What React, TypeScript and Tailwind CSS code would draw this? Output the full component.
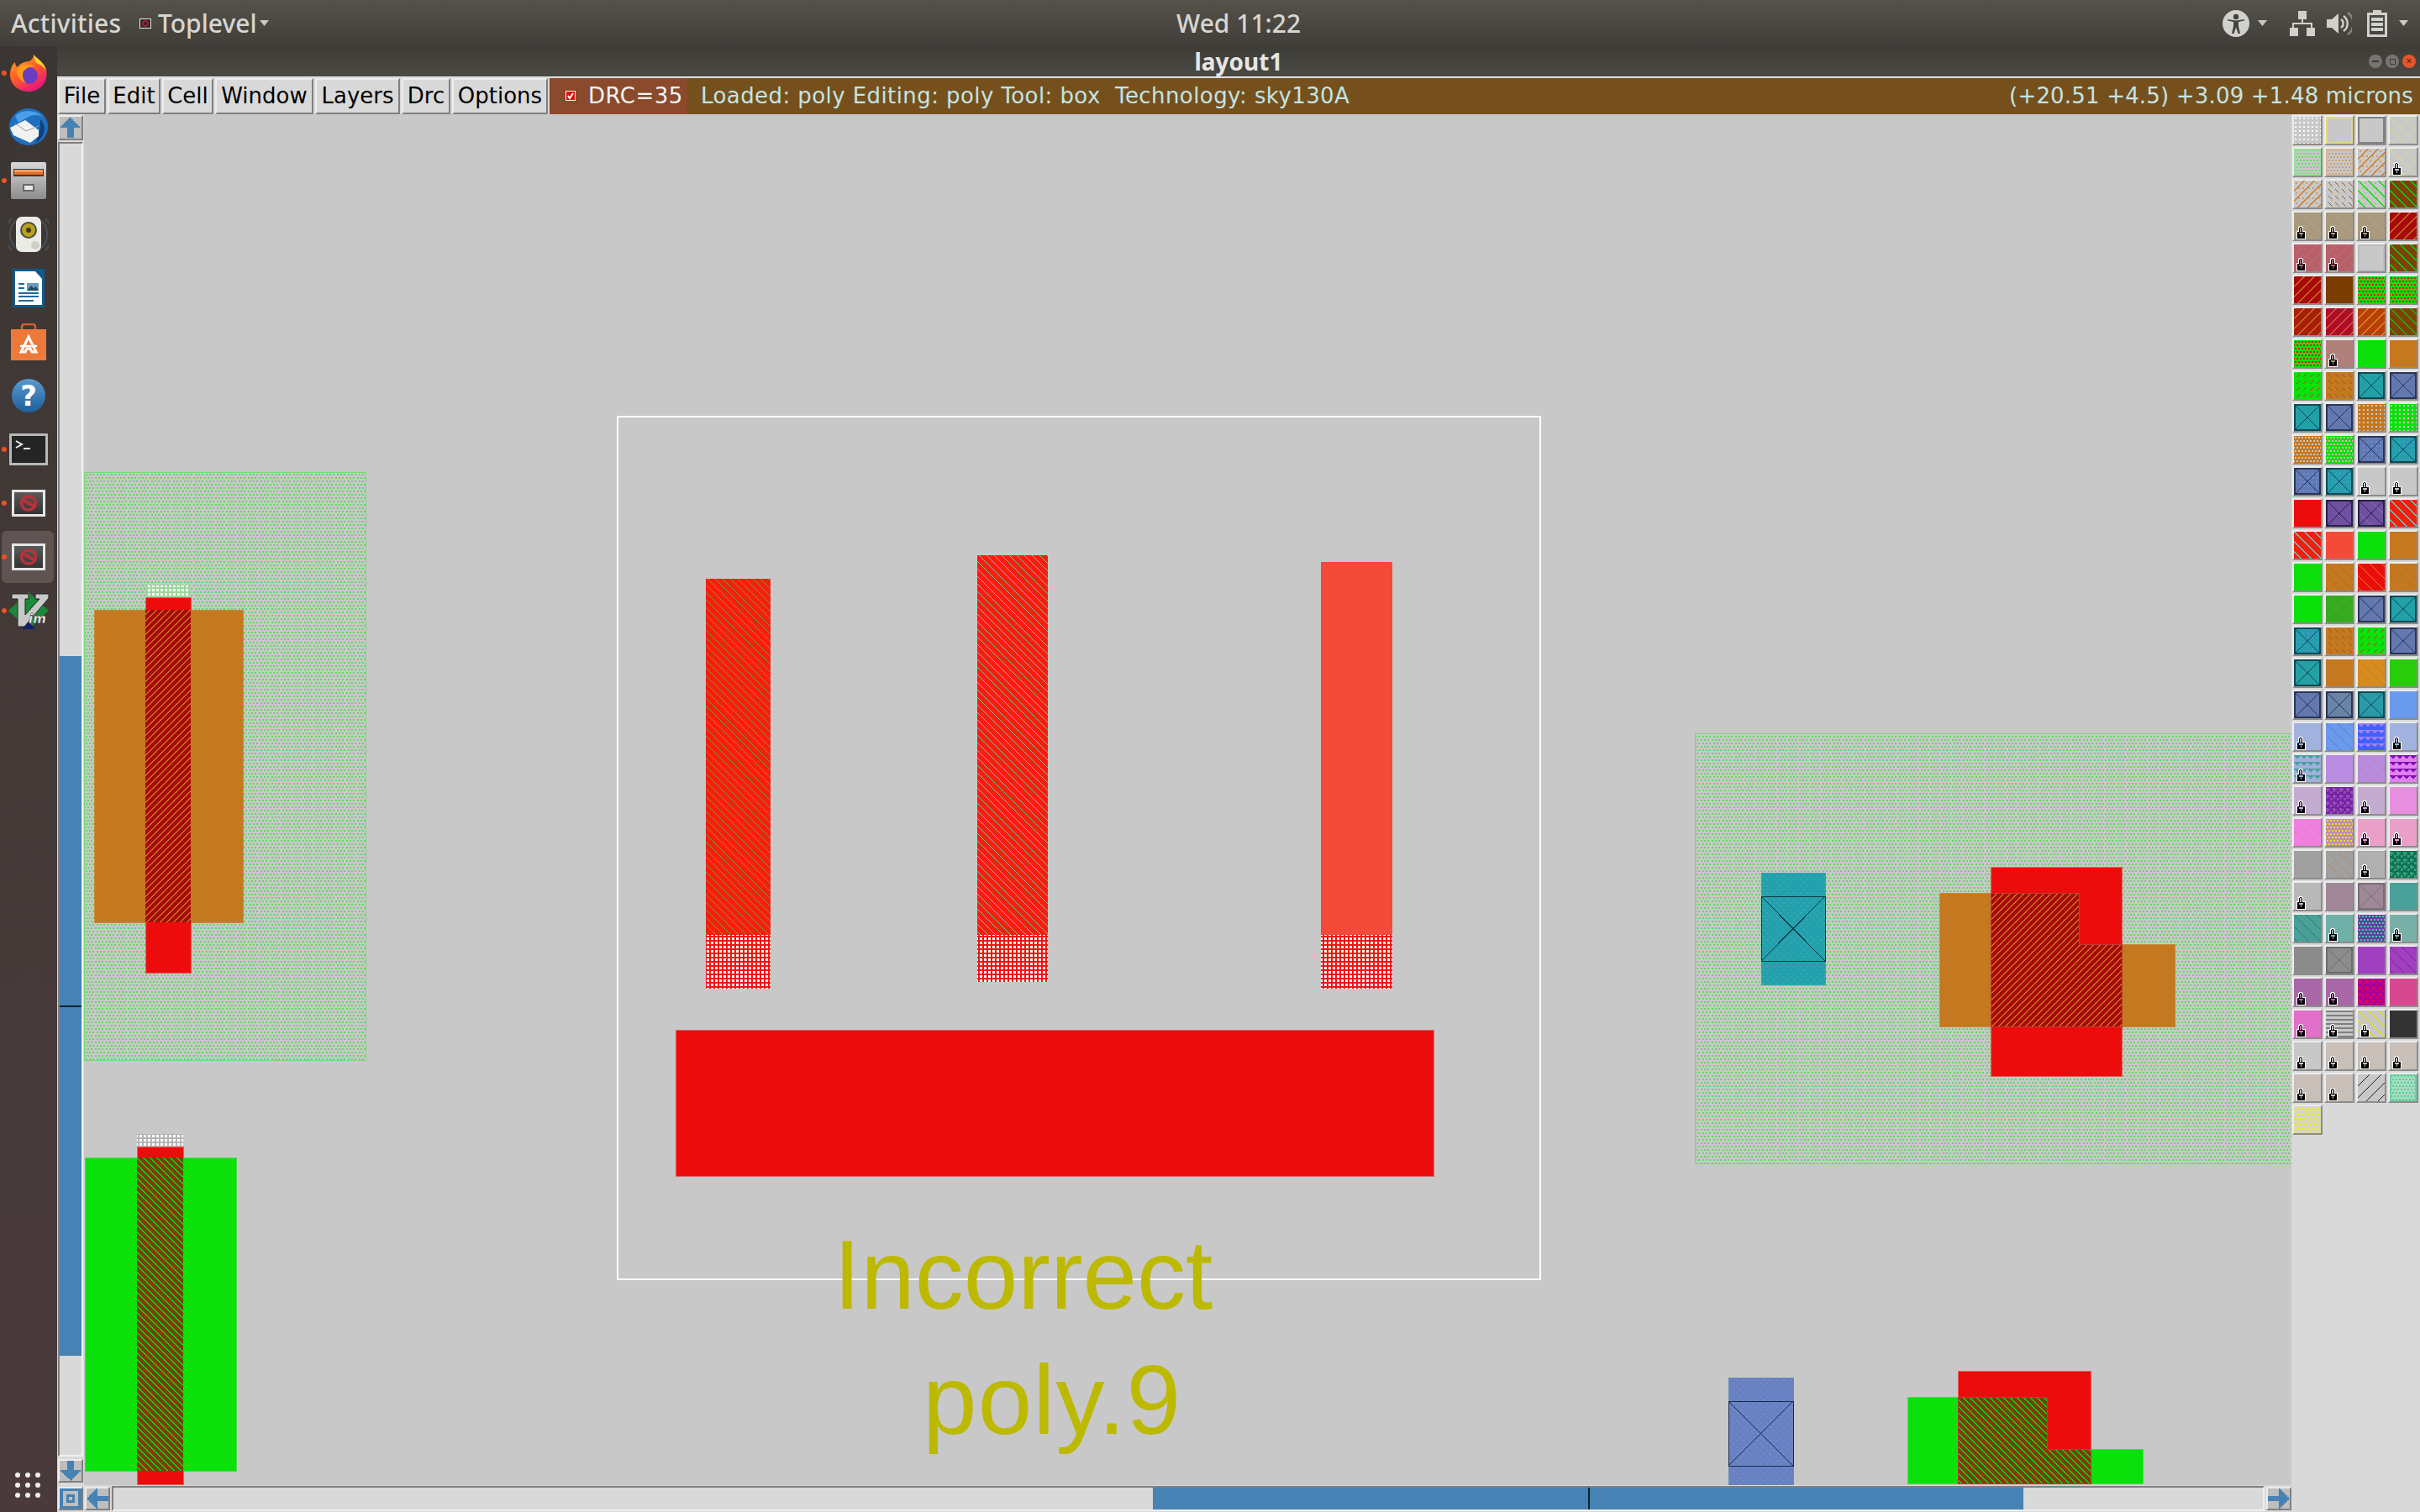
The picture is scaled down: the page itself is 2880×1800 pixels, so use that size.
import React from "react";

type Tile = { bg: string; p?: string; c?: string; d?: string; x?: string; lock?: boolean; edge?: string };
const T = (bg: string, o: Partial<Tile> = {}): Tile => ({ bg, ...o });
const C8 = "#c8c8c8";
const RED = "#ec0c0c";
const GRN = "#0ae00a";
const ORG = "#c47820";
const BRN = "#7d4208";
const TEAL = "#22a0a8";
const BLUE = "#6478b0";
const PUR = "#7050a0";

const tiles: Tile[] = [
  T(C8, { p: "grid", c: "#ffffff" }), T(C8, { edge: "#e0dc80" }), T(C8, { edge: "#808080" }), T(C8, { p: "nwt", c: "#e2e070" }),
  T(C8, { p: "dot", c: "#62e062", edge: "#9ae09a" }), T(C8, { p: "dot", c: "#cf9c6b", edge: "#d8b898" }), T(C8, { p: "ne", c: "#d07f28", d: "#cf9c6b" }), T(C8, { p: "nwt", c: "#e2e070", lock: true }),
  T(C8, { p: "ne", c: "#d07f28", d: "#cf9c6b" }), T(C8, { p: "sb", c: "#8a5a30", d: "#cf9c6b" }), T(C8, { p: "nw", c: "#10e010", d: "#7ae07a" }), T(BRN, { p: "nw", c: "#10d010" }),
  T("#ac9a80", { p: "nwt", c: "#7fa060", lock: true }), T("#ac9a80", { p: "nwt", c: "#7fa060", lock: true }), T("#ac9a80", { p: "nwt", c: "#7fa060", lock: true }), T("#a80a0a", { p: "ne", c: "#c4701f" }),
  T("#b8606a", { p: "net", c: "#c87078", lock: true }), T("#b8606a", { p: "net", c: "#c87078", lock: true }), T("#c8c8c8", { edge: "#bcbcbc" }), T(BRN, { p: "nw", c: "#10d010" }),
  T("#a80a0a", { p: "ne", c: "#c4701f" }), T("#7a3c00"), T(GRN, { p: "dot", c: "#f01010" }), T(GRN, { p: "dot", c: "#f01010", d: "#8a5a20" }),
  T("#a81e0a", { p: "ne", c: "#c4701f" }), T("#b00c28", { p: "ne", c: "#d05a40" }), T("#b84008", { p: "ne", c: "#d88a20" }), T(BRN, { p: "nw", c: "#20b010" }),
  T(GRN, { p: "dot", c: "#f01010", d: "#d88a20" }), T("#b0807a", { lock: true }), T(GRN), T(ORG),
  T(GRN, { p: "sf", c: "#a84030" }), T(ORG, { p: "sb", c: "#8a5a20" }), T(TEAL, { x: "#0e4a55" }), T(BLUE, { x: "#2a3558" }),
  T(TEAL, { x: "#0e4a55" }), T(BLUE, { x: "#2a3558" }), T(ORG, { p: "grid", c: C8 }), T(GRN, { p: "grid", c: C8 }),
  T(ORG, { p: "dot", c: C8, d: "#a86a18" }), T(GRN, { p: "dot", c: "#e8b0c0", d: "#40a030" }), T(BLUE, { x: "#2a3558", p: "grid", c: "#5a90e0" }), T(TEAL, { x: "#0e4a55", p: "grid", c: "#4a90d8" }),
  T(BLUE, { x: "#2a3558", p: "grid", c: "#5a90e0" }), T(TEAL, { x: "#0e4a55", p: "grid", c: "#4a90d8" }), T(C8, { lock: true }), T(C8, { lock: true }),
  T(RED), T(PUR, { x: "#28204a" }), T(PUR, { x: "#28204a", p: "nwt", c: "#8a70b8" }), T("#f0200a", { p: "nw", c: "#70c0c8" }),
  T("#f0200a", { p: "nw", c: "#70c0c8" }), T("#f44a3a"), T(GRN), T(ORG),
  T(GRN, { p: "net", c: "#30c020" }), T(ORG, { p: "nwt", c: "#b06a20" }), T(RED, { p: "nwt", c: "#d88a20" }), T(ORG, { p: "nwt", c: "#b87020" }),
  T(GRN), T("#38a820", { p: "net", c: "#30c020" }), T(BLUE, { x: "#2a3558" }), T(TEAL, { x: "#0e4a55" }),
  T(TEAL, { x: "#0e4a55", p: "grid", c: "#4a90d8" }), T(ORG, { p: "sb", c: "#8a5a20" }), T(GRN, { p: "sf", c: "#a84030" }), T(BLUE, { x: "#2a3558" }),
  T(TEAL, { x: "#0e4a55", p: "net", c: "#40a080" }), T(ORG), T("#d88c20", { p: "nwt", c: "#c07c28" }), T("#28cc08"),
  T(BLUE, { x: "#2a3558" }), T("#6a84a8", { x: "#2a3558" }), T("#2a9aa8", { x: "#0e4a55" }), T("#6a9aec"),
  T("#a2b2de", { lock: true }), T("#6a9aec", { p: "nwt", c: "#5a80c8" }), T("#4060ff", { p: "tri", c: "#a080f0" }), T("#a2b2de", { lock: true }),
  T("#a0b0dc", { p: "tri", c: "#48a0a0", lock: true }), T("#b88ce0"), T("#b88ce0", { p: "nwt", c: "#d07a9c" }), T("#e080f0", { p: "tri", c: "#8010b0" }),
  T("#c4acd0", { lock: true }), T("#7820a8", { p: "tex", c: "#9050b0" }), T("#c4acd0", { lock: true }), T("#e890e0"),
  T("#f080e0", { p: "nwt", c: "#e87ab0" }), T("#bc8cb0", { p: "dot", c: "#f0e020" }), T("#e8a0c8", { lock: true }), T("#e8a0c8", { lock: true }),
  T("#a0a0a0"), T("#a0a0a0", { p: "nwt", c: "#b08a60" }), T("#b0b0b0", { lock: true }), T("#107050", { p: "tex", c: "#30a080" }),
  T("#b8b8b8", { lock: true }), T("#a08898"), T("#a08898", { x: "#787078" }), T("#48a098"),
  T("#48a098", { p: "nwt", c: "#307868" }), T("#70b0a8", { lock: true }), T("#6040a0", { p: "dot", c: "#40d0a0" }), T("#78b0a8", { lock: true }),
  T("#8c8c8c"), T("#8c8c8c", { x: "#6c6c6c" }), T("#a040c0"), T("#a040c0", { p: "nwt", c: "#802090" }),
  T("#a868a8", { lock: true }), T("#a868a8", { lock: true }), T("#a000a0", { p: "tex", c: "#e00060" }), T("#d84890"),
  T("#e070c8", { lock: true }), T(C8, { p: "hl", c: "#808080", lock: true }), T(C8, { p: "nw", c: "#e0dc20", lock: true }), T("#333333"),
  T(C8, { lock: true }), T("#c8c0b8", { lock: true }), T("#c8c0b8", { lock: true }), T("#c8c0b8", { lock: true }),
  T("#c8c0b8", { lock: true }), T("#c8c0b8", { lock: true }), T(C8, { p: "net", c: "#202020" }), T("#a8dcc0", { p: "dot", c: "#50d0a0", edge: "#70d0a0" }),
  T("#d4d4c8", { p: "dot", c: "#f0f020" }),
];

function stripes(dir: "/" | "\\", period: number, w: number, fill: string) {
  const out: React.ReactElement[] = [];
  for (let y = 0; y < period; y++) {
    const x = dir === "/" ? period - 1 - y : y;
    out.push(<rect key={y} x={x} y={y} width={w} height={1} fill={fill} />);
    if (x + w > period) out.push(<rect key={"w" + y} x={x + w - period - w} y={y} width={w} height={1} fill={fill} />);
  }
  return out;
}

function DotsFor12({ c }: { c: string }) {
  return (
    <>
      <rect x={2} y={2} width={2} height={2} fill={c} />
      <rect x={8} y={2} width={2} height={2} fill={c} />
      <rect x={5} y={8} width={2} height={2} fill={c} />
      <rect x={10} y={8} width={2} height={2} fill={c} />
    </>
  );
}

function PatternBody({ t }: { t: Tile }) {
  const c = t.c ?? "#fff";
  switch (t.p) {
    case "grid":
      return <rect x={1} y={1} width={2} height={2} fill={c} />;
    case "dot":
      return (
        <>
          <rect x={1} y={1} width={2} height={2} fill={c} />
          <rect x={5} y={1} width={2} height={2} fill={c} />
          <rect x={3} y={5} width={2} height={2} fill={c} />
          <rect x={7} y={5} width={1} height={2} fill={c} />
          <rect x={0} y={5} width={1} height={2} fill={c} />
          {t.d && <rect x={6} y={4} width={1} height={1} fill={t.d} />}
        </>
      );
    case "ne":
      return (
        <>
          {t.d && <DotsFor12 c={t.d} />}
          {stripes("/", 12, 2, c)}
        </>
      );
    case "nw":
      return (
        <>
          {t.d && <DotsFor12 c={t.d} />}
          {stripes("\\", 12, 2, c)}
        </>
      );
    case "nwt":
      return <>{stripes("\\", 14, 1, c)}</>;
    case "net":
      return <>{stripes("/", 14, 1, c)}</>;
    case "sf":
      return (
        <>
          <rect x={6} y={2} width={1} height={1} fill={c} />
          <rect x={5} y={3} width={1} height={1} fill={c} />
          <rect x={4} y={4} width={1} height={1} fill={c} />
          <rect x={3} y={5} width={1} height={1} fill={c} />
        </>
      );
    case "sb":
      return (
        <>
          {t.d && <rect x={7} y={6} width={2} height={2} fill={t.d} />}
          <rect x={3} y={2} width={1} height={1} fill={c} />
          <rect x={4} y={3} width={1} height={1} fill={c} />
          <rect x={5} y={4} width={1} height={1} fill={c} />
          <rect x={6} y={5} width={1} height={1} fill={c} />
        </>
      );
    case "tri":
      return <path d="M0 0h8v1h-1v1h-1v1h-1v1h-2v-1h-1v-1h-1v-1h-1z" fill={c} />;
    case "tex":
      return <path d="M0 1h3v1h2v2h-2v2h-2v-2h-1zM5 5h3v2h-1v1h-2z" fill={c} />;
    case "hl":
      return <rect x={0} y={0} width={8} height={2} fill={c} />;
    default:
      return null;
  }
}
const patternSize = (p?: string): [number, number] => {
  if (p === "grid") return [5, 5];
  if (p === "ne" || p === "nw") return [12, 12];
  if (p === "nwt" || p === "net") return [14, 14];
  if (p === "hl") return [8, 5];
  return [8, 8];
};

function Lock({ bg }: { bg: string }) {
  return (
    <g transform="translate(2 15)">
      <path d="M3 7V3L5 0.8H7L9 3V7H11.5V17H0.5V7Z" fill="#fff" />
      <path d="M4 8V3.5L5.5 2H6.5L8 3.5V8H10.5V16H1.5V8Z" fill="#000" />
      <rect x={5} y={3} width={2} height={1} fill={bg} />
      <rect x={4.8} y={4} width={2.4} height={3.5} fill={bg} />
      <rect x={3.5} y={9} width={5} height={2} fill={bg} />
      <rect x={5.5} y={11} width={1.2} height={3} fill={bg} />
    </g>
  );
}

function TileCell({ t, i }: { t: Tile; i: number }) {
  const [w, h] = patternSize(t.p);
  return (
    <div className="w-[36px] h-[36px] border-2 border-t-[#ececec] border-l-[#ececec] border-r-[#8c8c8c] border-b-[#8c8c8c]">
      <svg width={32} height={32} viewBox="0 0 32 32" shapeRendering="crispEdges" className="block">
        {t.p && (
          <defs>
            <pattern id={"tile" + i} width={w} height={h} patternUnits="userSpaceOnUse">
              <PatternBody t={t} />
            </pattern>
          </defs>
        )}
        <rect width={32} height={32} fill={t.bg} />
        {t.p && <rect width={32} height={32} fill={`url(#tile${i})`} />}
        {t.edge && <rect x={1} y={1} width={30} height={30} fill="none" stroke={t.edge} strokeWidth={2} />}
        {t.x && (
          <>
            <rect x={1} y={1} width={30} height={30} fill="none" stroke={t.x} strokeWidth={2} />
            <path d="M1 1L31 31M31 1L1 31" stroke={t.x} strokeWidth={1} fill="none" />
          </>
        )}
        {t.lock && <Lock bg={t.bg} />}
      </svg>
    </div>
  );
}

const raised = "border-2 border-t-[#ececec] border-l-[#ececec] border-r-[#808080] border-b-[#808080]";
const mono = "font-['DejaVu_Sans',sans-serif]";
const ui = "font-['Noto_Sans',sans-serif]";

function Arrow({ d }: { d: string }) {
  return (
    <svg width={26} height={24} viewBox="0 0 26 24" shapeRendering="crispEdges" className="block">
      <path d={d} fill="#4682b4" />
    </svg>
  );
}

function MenuBtn({ label, w }: { label: string; w: string }) {
  return (
    <div className={`${w} h-[43px] ${raised} bg-[#d9d9d9] flex items-center justify-center pb-[2px] text-[26px] leading-none text-black ${mono}`}>
      {label}
    </div>
  );
}

function Caret() {
  return (
    <svg width={11} height={7} viewBox="0 0 11 7" className="block">
      <path d="M0 0H11L5.5 7Z" fill="#c8c8c4" />
    </svg>
  );
}

function TopBar() {
  return (
    <div className={`h-[55px] shrink-0 flex items-center bg-gradient-to-b from-[#56524a] to-[#403e39] text-[#d6d6d2] ${ui}`}>
      <div className="w-[1400px] flex items-center">
        <span className="ml-[13px] w-[132px] text-[30px] font-medium leading-none tracking-[0.2px]">Activities</span>
        <svg width={14} height={12} viewBox="0 0 14 12" className="ml-[21px] block">
          <rect width={14} height={12} fill="#e6e6e6" />
          <rect x={1} y={1} width={12} height={10} fill="#2a2a2a" />
          <circle cx={7} cy={6} r={3} fill="none" stroke="#c02020" strokeWidth={1.5} />
        </svg>
        <span className="ml-[8px] text-[30px] font-medium leading-none">Toplevel</span>
        <span className="ml-[3px]"><Caret /></span>
      </div>
      <div className="w-[148px] text-center text-[30px] font-medium leading-none whitespace-nowrap">Wed 11:22</div>
      <div className="flex-1 flex items-center justify-end pr-[14px]">
        <svg width={32} height={32} viewBox="0 0 32 32" className="block">
          <circle cx={16} cy={16} r={16} fill="#d0d0cc" />
          <circle cx={16} cy={8} r={3.2} fill="#45433e" />
          <path d="M6 12.5L13 14V19L11 28H13.5L16 20.5L18.5 28H21L19 19V14L26 12.5V11L16 12.5L6 11Z" fill="#45433e" />
        </svg>
        <span className="ml-[10px]"><Caret /></span>
        <svg width={30} height={30} viewBox="0 0 30 30" className="ml-[27px] block">
          <path d="M10 0H20V10H16V14H27V20H30V30H20V20H25V16H5V20H10V30H0V20H3V14H14V10H10Z" fill="#d0d0cc" />
        </svg>
        <svg width={30} height={30} viewBox="0 0 30 30" className="ml-[14px] block">
          <path d="M0 10H6L14 3V27L6 20H0Z" fill="#d0d0cc" />
          <path d="M17 10A6 6 0 0 1 17 20M20 6A11 11 0 0 1 20 24" fill="none" stroke="#d0d0cc" strokeWidth={2.4} />
          <path d="M25 2A16 16 0 0 1 25 28" fill="none" stroke="#85837e" strokeWidth={2.6} />
        </svg>
        <svg width={24} height={32} viewBox="0 0 24 32" className="ml-[18px] block">
          <path d="M7 0H17V3H24V32H0V3H7ZM3 6V29H21V6Z" fill="#d0d0cc" />
          <path d="M5 9H19V13H5ZM5 15H19V19H5ZM5 21H19V25H5Z" fill="#d0d0cc" />
        </svg>
        <span className="ml-[14px]"><Caret /></span>
      </div>
    </div>
  );
}

function Firefox() {
  return (
    <svg width={46} height={46} viewBox="0 0 46 46" className="block">
      <defs>
        <linearGradient id="ffa" x1="0" y1="0" x2="0.6" y2="1">
          <stop offset="0" stopColor="#ffb320" />
          <stop offset="0.55" stopColor="#ff5a2a" />
          <stop offset="1" stopColor="#e8187a" />
        </linearGradient>
      </defs>
      <path d="M29 1C32 6 40 8 44 19C47 33 37 45 23 45C10 45 1 36 1 25C1 19 3 13 7 10C7 13 8 15 10 16C13 11 19 9 24 9C27 7 29 4 29 1Z" fill="url(#ffa)" />
      <path d="M29 1C33 6 42 10 44 20C41 15 36 12 32 11C31 8 30 5 29 1Z" fill="#ffd42a" />
      <circle cx={24} cy={26} r={10} fill="#6a3cc0" />
      <path d="M9 18C13 12 24 11 30 15C25 15 20 17 17 21C15 25 16 31 20 35C14 33 8 27 9 18Z" fill="#ff9a1a" />
    </svg>
  );
}
function Thunderbird() {
  return (
    <svg width={48} height={46} viewBox="0 0 48 46" className="block">
      <ellipse cx={24} cy={23} rx={23} ry={22} fill="#1f6fc0" />
      <path d="M8 10C16 2 34 2 42 12C38 8 28 8 22 12L12 18Z" fill="#4aa0e8" />
      <path d="M38 14C46 22 44 36 32 42C38 32 38 24 38 14Z" fill="#123f80" />
      <path d="M2 24L20 15L36 27V34L26 42L6 33Z" fill="#f2f2f2" />
      <path d="M8 19L21 28L36 22" fill="none" stroke="#9a9a9a" strokeWidth={1} />
    </svg>
  );
}
function Files() {
  return (
    <svg width={42} height={44} viewBox="0 0 42 44" className="block">
      <defs>
        <linearGradient id="fla" x1="0" y1="0" x2="0" y2="1">
          <stop offset="0" stopColor="#d8d8d8" />
          <stop offset="1" stopColor="#8c8c8c" />
        </linearGradient>
      </defs>
      <rect x={0} y={0} width={42} height={44} rx={2} fill="url(#fla)" />
      <rect x={3} y={8} width={36} height={9} fill="#3a3a3a" />
      <rect x={4} y={9} width={34} height={3} fill="#f0a060" />
      <rect x={4} y={12} width={34} height={3} fill="#e86a20" />
      <rect x={14} y={26} width={14} height={9} rx={1} fill="#666" />
      <rect x={16} y={28} width={10} height={5} fill="#e8e8e8" />
    </svg>
  );
}
function Rhythm() {
  return (
    <svg width={48} height={44} viewBox="0 0 48 44" className="block">
      <path d="M8 6A24 24 0 0 0 8 38M4 3A28 28 0 0 0 4 41M40 6A24 24 0 0 1 40 38M44 3A28 28 0 0 1 44 41" fill="none" stroke="#4b5058" strokeWidth={2} />
      <rect x={9} y={1} width={30} height={42} rx={7} fill="#ecece6" />
      <circle cx={24} cy={17} r={10} fill="#4a4a40" />
      <circle cx={24} cy={17} r={8} fill="#b8a020" />
      <circle cx={24} cy={17} r={3} fill="#3a3a1a" />
      <circle cx={32} cy={35} r={5} fill="#cfcfc8" />
    </svg>
  );
}
function Writer() {
  return (
    <svg width={40} height={48} viewBox="0 0 40 48" className="block">
      <path d="M1 1H30L39 11V47H1Z" fill="#0f5a8a" />
      <path d="M4 4H28L36 13V44H4Z" fill="#fff" />
      <path d="M28 1H39V11Z" fill="#0f5a8a" />
      <rect x={18} y={18} width={14} height={9} fill="#6a9ac0" />
      <path d="M18 27L23 21L26 24L29 22L32 27Z" fill="#2a4a60" />
      <path d="M8 18H15V20H8ZM8 23H15V25H8ZM8 29H32V31H8ZM8 33H32V35H8ZM8 38H26V40H8Z" fill="#1a6aa0" />
    </svg>
  );
}
function Software() {
  return (
    <svg width={42} height={44} viewBox="0 0 42 44" className="block">
      <path d="M13 9V4Q13 1 16 1H26Q29 1 29 4V9" fill="none" stroke="#d8602a" strokeWidth={2.5} />
      <rect x={0} y={7} width={42} height={37} fill="#ee7a3a" />
      <path d="M21 16L12 34H17L19 30H23L25 34H30Z" fill="none" stroke="#fff" strokeWidth={3} />
      <path d="M11 27H31" stroke="#fff" strokeWidth={2.5} />
    </svg>
  );
}
function Help() {
  return (
    <svg width={40} height={40} viewBox="0 0 40 40" className="block">
      <defs>
        <linearGradient id="hlp" x1="0" y1="0" x2="0" y2="1">
          <stop offset="0" stopColor="#5a9ad0" />
          <stop offset="1" stopColor="#1f5f9a" />
        </linearGradient>
      </defs>
      <circle cx={20} cy={20} r={20} fill="url(#hlp)" />
      <text x={20} y={32} textAnchor="middle" fontSize={34} fontWeight={700} fill="#fff" className={mono}>?</text>
    </svg>
  );
}
function Terminal() {
  return (
    <svg width={46} height={38} viewBox="0 0 46 38" className="block">
      <rect width={46} height={38} rx={1} fill="#b8b8b8" />
      <rect x={3} y={3} width={40} height={32} fill="#232625" />
      <path d="M8 9L15 13L8 17" fill="none" stroke="#eee" strokeWidth={2} />
      <path d="M17 18H25" stroke="#eee" strokeWidth={2} />
    </svg>
  );
}
function Wish({ id }: { id: string }) {
  return (
    <svg width={40} height={32} viewBox="0 0 40 32" className="block">
      <defs>
        <linearGradient id={id} x1="0" y1="0" x2="0" y2="1">
          <stop offset="0" stopColor="#5a5a5a" />
          <stop offset="1" stopColor="#333333" />
        </linearGradient>
      </defs>
      <rect width={40} height={32} fill="#e6e6e6" />
      <rect x={3} y={3} width={34} height={26} fill={`url(#${id})`} />
      <ellipse cx={20} cy={16} rx={8.5} ry={8} fill="none" stroke="#b8323a" strokeWidth={3.5} />
      <path d="M12.5 12L27.5 20" stroke="#b8323a" strokeWidth={4} />
    </svg>
  );
}
function Vim() {
  return (
    <svg width={50} height={46} viewBox="0 0 50 46" className="block">
      <path d="M25 1L49 23L25 45L1 23Z" fill="#1a8a3a" />
      <path d="M25 36L33 45H17Z" fill="#14206a" />
      <path d="M5 3H25V9H21V28L38 9H33V3H49V8L20 42H12V9H5Z" fill="#c8c8c8" stroke="#222" strokeWidth={1} />
      <text x={25} y={38} fontSize={15} fontStyle="italic" fontWeight={700} fill="#f0f0f0" stroke="#222" strokeWidth={0.4} className={mono}>im</text>
    </svg>
  );
}

function DockItem({ children, dot, active }: { children: React.ReactNode; dot?: boolean; active?: boolean }) {
  return (
    <div className="relative h-[64px] w-[68px] flex items-center justify-center">
      {active && <div className="absolute left-[2px] right-[4px] top-[1px] bottom-[1px] rounded-[6px] bg-[#5f5452]" />}
      {dot && <div className="absolute left-[2px] top-[29px] w-[6px] h-[6px] rounded-full bg-[#e95420]" />}
      <div className="relative">{children}</div>
    </div>
  );
}

function Dock() {
  return (
    <div className="w-[68px] shrink-0 flex flex-col bg-gradient-to-b from-[#3b3633] via-[#453a38] to-[#4a3a3c]">
      <DockItem dot><Firefox /></DockItem>
      <DockItem><Thunderbird /></DockItem>
      <DockItem dot><Files /></DockItem>
      <DockItem><Rhythm /></DockItem>
      <DockItem><Writer /></DockItem>
      <DockItem><Software /></DockItem>
      <DockItem><Help /></DockItem>
      <DockItem dot><Terminal /></DockItem>
      <DockItem dot><Wish id="wa" /></DockItem>
      <DockItem dot active><Wish id="wb" /></DockItem>
      <DockItem dot><Vim /></DockItem>
      <div className="mt-auto mb-[17px] ml-[18px] grid grid-cols-3 w-[30px] gap-x-[6px] gap-y-[6px]">
        {Array.from({ length: 9 }).map((_, i) => (
          <div key={i} className="w-[6px] h-[6px] rounded-full bg-[#eeeeee]" />
        ))}
      </div>
    </div>
  );
}

function TitleBar() {
  return (
    <div className="h-[36px] shrink-0 flex items-center bg-gradient-to-b from-[#3e3c37] to-[#4b4944] relative">
      <div className={`flex-1 text-center text-[28px] font-bold leading-none text-[#e6e6e2] ${ui}`}>layout1</div>
      <div className="absolute right-[5px] top-[10px] flex gap-[4px]">
        <div className="w-[16px] h-[16px] rounded-full bg-[#77756f] flex items-center justify-center"><div className="w-[8px] h-[2px] bg-[#3c3a36]" /></div>
        <div className="w-[16px] h-[16px] rounded-full bg-[#77756f] flex items-center justify-center"><div className="w-[7px] h-[7px] border border-[#3c3a36]" /></div>
        <div className="w-[16px] h-[16px] rounded-full bg-[#e2562a] flex items-center justify-center text-[12px] leading-none text-[#4a2010]">×</div>
      </div>
    </div>
  );
}

function MenuRow() {
  return (
    <div className="h-[45px] shrink-0 flex bg-[#d9d9d9] border-t border-[#ececec]">
      <div className="flex gap-[2px] pl-[1px] pt-px">
        <MenuBtn label="File" w="w-[57px]" />
        <MenuBtn label="Edit" w="w-[63px]" />
        <MenuBtn label="Cell" w="w-[61px]" />
        <MenuBtn label="Window" w="w-[117px]" />
        <MenuBtn label="Layers" w="w-[101px]" />
        <MenuBtn label="Drc" w="w-[58px]" />
        <MenuBtn label="Options" w="w-[114px]" />
      </div>
      <div className={`ml-[2px] w-[164px] h-[43px] mt-px pb-[2px] bg-[#8a4a2b] flex items-center text-[26px] leading-none text-[#f4f4f4] ${mono}`}>
        <svg width={12} height={12} viewBox="0 0 12 12" className="ml-[19px] block">
          <rect width={12} height={12} fill="#f8e8e8" />
          <rect x={1} y={1} width={10} height={10} fill="#e80c0c" />
          <path d="M3 6L5 9L9 3" fill="none" stroke="#fff" strokeWidth={2} />
        </svg>
        <span className="ml-[15px] tracking-[0.5px]">DRC=35</span>
      </div>
      <div className={`flex-1 h-[44px] mt-px pb-[2px] bg-[#75501d] flex items-center justify-between pl-[16px] pr-[8px] text-[26px] leading-none text-[#c4e4e4] whitespace-pre ${mono}`}>
        <span className="tracking-[0.42px]">Loaded: poly Editing: poly Tool: box  Technology: sky130A</span>
        <span className="tracking-[0.18px]">(+20.51 +4.5) +3.09 +1.48 microns</span>
      </div>
    </div>
  );
}

const X = ({ x, y, w, h, c }: { x: number; y: number; w: number; h: number; c: string }) => (
  <g>
    <rect x={x} y={y} width={w} height={h} fill="none" stroke={c} strokeWidth={1} />
    <path d={`M${x} ${y}L${x + w} ${y + h}M${x + w} ${y}L${x} ${y + h}`} stroke={c} strokeWidth={1} fill="none" />
  </g>
);

function P({ id, s, h, children }: { id: string; s: number; h?: number; children: React.ReactNode }) {
  return (
    <pattern id={id} width={s} height={h ?? s} patternUnits="userSpaceOnUse">
      {children}
    </pattern>
  );
}

function LayoutCanvas() {
  const redEdge = "#e06060";
  const hatchEdge = "#c03a3a";
  return (
    <svg width={2627} height={1632} viewBox="100 136 2627 1632" shapeRendering="crispEdges" className="block bg-[#c8c8c8]">
      <defs>
        <P id="well" s={13} h={8}>
          <rect x={0} y={0} width={2} height={2} fill="#62d862" />
          <rect x={4} y={0} width={2} height={2} fill="#62d862" />
          <rect x={9} y={0} width={2} height={2} fill="#62d862" />
          <rect x={2} y={4} width={2} height={2} fill="#62d862" />
          <rect x={6} y={4} width={2} height={2} fill="#62d862" />
          <rect x={11} y={4} width={2} height={2} fill="#62d862" />
        </P>
        <P id="nh" s={8}>
          <rect width={8} height={8} fill="#a80a0a" />
          {stripes("/", 8, 2, "#c4701f")}
        </P>
        <P id="ph" s={8}>
          <rect width={8} height={8} fill="#7d3c08" />
          {stripes("\\", 8, 2, "#0ad80a")}
        </P>
        <P id="polyA" s={9}>
          <rect width={9} height={9} fill="#fb1c0a" />
          {stripes("\\", 9, 1, "#7a9a50")}
        </P>
        <P id="polyB" s={9}>
          <rect width={9} height={9} fill="#fb1c0a" />
          {stripes("\\", 9, 1, "#8ab4c0")}
        </P>
        <P id="wd" s={5}>
          <rect width={5} height={5} fill="#f01414" />
          <rect x={1} y={1} width={3} height={3} fill="#ffffff" />
        </P>
        <P id="cap" s={5}>
          <rect width={5} height={5} fill="#9ad89a" />
          <rect x={1} y={1} width={3} height={3} fill="#ffffff" />
        </P>
        <P id="capG" s={5}>
          <rect width={5} height={5} fill="#b4b4b4" />
          <rect x={1} y={1} width={3} height={3} fill="#ffffff" />
        </P>
        <P id="tealD" s={8}>
          <rect width={8} height={8} fill="#22a0ae" />
          <rect x={2} y={2} width={2} height={2} fill="#38a8a8" />
          <rect x={6} y={6} width={2} height={2} fill="#38a8a8" />
        </P>
        <P id="blueD" s={8}>
          <rect width={8} height={8} fill="#6a80c0" />
          <rect x={2} y={2} width={2} height={2} fill="#6090d8" />
          <rect x={6} y={6} width={2} height={2} fill="#6090d8" />
        </P>
      </defs>

      {/* left n-well transistor */}
      <rect x={100} y={562} width={335} height={700} fill="url(#well)" stroke="#7ad87a" strokeWidth={1} />
      <rect x={174} y={697} width={52} height={14} fill="url(#cap)" />
      <rect x={112} y={726} width={177} height={372} fill={ORG} stroke="#c88a3a" strokeWidth={1} />
      <rect x={173} y={711} width={54} height={447} fill={RED} stroke={redEdge} strokeWidth={1} />
      <rect x={173} y={726} width={54} height={372} fill="url(#nh)" />

      {/* lower-left transistor */}
      <rect x={163} y={1350} width={55} height={15} fill="url(#capG)" />
      <rect x={101} y={1378} width={180} height={373} fill={GRN} stroke="#50d850" strokeWidth={1} />
      <rect x={163} y={1365} width={55} height={402} fill={RED} stroke={redEdge} strokeWidth={1} />
      <rect x={163} y={1378} width={55} height={373} fill="url(#ph)" />

      {/* central cell */}
      <rect x={735} y={496} width={1098} height={1027} fill="none" stroke="#ffffff" strokeWidth={2} />
      <rect x={840} y={689} width={77} height={424} fill="url(#polyA)" />
      <rect x={840} y={1113} width={77} height={64} fill="url(#wd)" />
      <rect x={1163} y={661} width={84} height={452} fill="url(#polyB)" />
      <rect x={1163} y={1113} width={84} height={56} fill="url(#wd)" />
      <rect x={1572} y={669} width={85} height={444} fill="#f44a3a" />
      <rect x={1572} y={1113} width={85} height={64} fill="url(#wd)" />
      <rect x={804} y={1226} width={902} height={174} fill={RED} stroke={redEdge} strokeWidth={1} />
      <text x={992} y={1558} fontSize={116} fill="#bcb900" className="font-['Liberation_Sans',sans-serif]">Incorrect</text>
      <text x={1098} y={1707} fontSize={116} letterSpacing={1.2} fill="#bcb900" className="font-['Liberation_Sans',sans-serif]">poly.9</text>

      {/* right well */}
      <rect x={2017} y={873} width={712} height={512} fill="url(#well)" stroke="#7ad87a" strokeWidth={1} />
      <rect x={2096} y={1039} width={76} height={133} fill="url(#tealD)" stroke="#30a8a0" strokeWidth={1} />
      <X x={2096} y={1067} w={76} h={77} c="#0c3a44" />
      <rect x={2308} y={1063} width={61} height={159} fill={ORG} stroke="#c88a3a" strokeWidth={1} />
      <rect x={2525} y={1124} width={63} height={98} fill={ORG} stroke="#c88a3a" strokeWidth={1} />
      <rect x={2369} y={1032} width={156} height={249} fill={RED} stroke={redEdge} strokeWidth={1} />
      <path d="M2369 1063H2474V1124H2525V1222H2369Z" fill="url(#nh)" stroke={hatchEdge} strokeWidth={1} />

      {/* bottom cells */}
      <rect x={2057} y={1640} width={77} height={127} fill="url(#blueD)" stroke="#6a88b8" strokeWidth={1} />
      <X x={2057} y={1668} w={77} h={77} c="#1c2a50" />
      <rect x={2270} y={1663} width={60} height={103} fill={GRN} stroke="#50d850" strokeWidth={1} />
      <rect x={2488} y={1725} width={62} height={41} fill={GRN} stroke="#50d850" strokeWidth={1} />
      <rect x={2330} y={1632} width={158} height={134} fill={RED} stroke={redEdge} strokeWidth={1} />
      <path d="M2330 1663H2436V1725H2488V1766H2330Z" fill="url(#ph)" stroke={hatchEdge} strokeWidth={1} />
    </svg>
  );
}

function VScroll() {
  return (
    <div className="w-[32px] shrink-0 flex flex-col pl-[1px] pr-[1px] pt-[1px] pb-[3px] bg-[#d9d9d9]">
      <div className={`h-[30px] shrink-0 ${raised} bg-[#bebebe] flex items-center justify-center`}>
        <Arrow d="M13 0h1v2h2v2h2v2h2v2h2v2h2v2H17V24H9V12H1V10h2V8h2V6h2V4h2V2h2V0h2z" />
      </div>
      <div className="mt-[2px] flex-1 flex flex-col border-2 border-t-[#808080] border-l-[#808080] border-r-[#f0f0f0] border-b-[#f0f0f0] bg-[#d9d9d9]">
        <div className="h-[610px] shrink-0" />
        <div className="relative h-[833px] shrink-0 bg-[#4682b4]">
          <div className="absolute left-0 right-0 top-[416px] h-[2px] bg-[#10202c]" />
        </div>
      </div>
      <div className={`mt-[3px] h-[28px] shrink-0 ${raised} bg-[#bebebe] flex items-center justify-center`}>
        <Arrow d="M9 0H17V11H25V13h-2v2h-2v2h-2v2h-2v2h-2v2h-1v1h-1v-1h-1v-2H9v-2H7v-2H5v-2H3v-2H1V11H9Z" />
      </div>
    </div>
  );
}

function HScroll() {
  return (
    <div className="h-[32px] shrink-0 flex items-center pl-[1px] bg-[#d9d9d9]">
      <div className={`w-[30px] h-[28px] ${raised} bg-[#4682b4] flex items-center justify-center`}>
        <div className="w-[18px] h-[18px] bg-[#bebebe] flex items-center justify-center">
          <div className="w-[10px] h-[10px] bg-[#4682b4] flex items-center justify-center">
            <div className="w-[4px] h-[4px] bg-[#bebebe]" />
          </div>
        </div>
      </div>
      <div className={`ml-[2px] w-[30px] h-[28px] ${raised} bg-[#bebebe] flex items-center justify-center`}>
        <svg width={26} height={24} viewBox="0 0 26 24" shapeRendering="crispEdges" className="block">
          <path d="M0 12h1v-2h2v-2h2v-2h2v-2h2v-2h2v-2h2V9H26V15H13V24H11V22H9V20H7V18H5V16H3V14H1V12Z" fill="#4682b4" />
        </svg>
      </div>
      <div className="ml-[2px] flex-1 h-[30px] flex border-2 border-t-[#808080] border-l-[#808080] border-r-[#f0f0f0] border-b-[#f0f0f0] bg-[#d9d9d9]">
        <div className="w-[1237px] shrink-0" />
        <div className="relative w-[1036px] shrink-0 bg-[#4682b4]">
          <div className="absolute top-0 bottom-0 left-[518px] w-[2px] bg-[#10202c]" />
        </div>
      </div>
      <div className={`ml-[2px] w-[30px] h-[28px] ${raised} bg-[#bebebe] flex items-center justify-center`}>
        <svg width={26} height={24} viewBox="0 0 26 24" shapeRendering="crispEdges" className="block">
          <path d="M26 12h-1v-2h-2v-2h-2v-2h-2v-2h-2v-2h-2v-2h-2V9H0V15H13V24H15V22H17V20H19V18H21V16H23V14H25V12Z" fill="#4682b4" />
        </svg>
      </div>
    </div>
  );
}

function Palette() {
  return (
    <div className="w-[153px] shrink-0 bg-[#d9d9d9] pl-px pt-px">
      <div className="grid grid-cols-[repeat(4,36px)] gap-[2px]">
        {tiles.map((t, i) => (
          <TileCell key={i} t={t} i={i} />
        ))}
      </div>
    </div>
  );
}

export default function App() {
  return (
    <div className="w-[2880px] h-[1800px] flex flex-col overflow-hidden bg-[#d9d9d9]">
      <TopBar />
      <div className="flex flex-1 min-h-0">
        <Dock />
        <div className="flex-1 flex flex-col min-w-0">
          <TitleBar />
          <MenuRow />
          <div className="flex flex-1 min-h-0">
            <div className="flex-1 flex flex-col min-w-0">
              <div className="flex h-[1632px] shrink-0">
                <VScroll />
                <LayoutCanvas />
              </div>
              <HScroll />
            </div>
            <Palette />
          </div>
        </div>
      </div>
    </div>
  );
}
